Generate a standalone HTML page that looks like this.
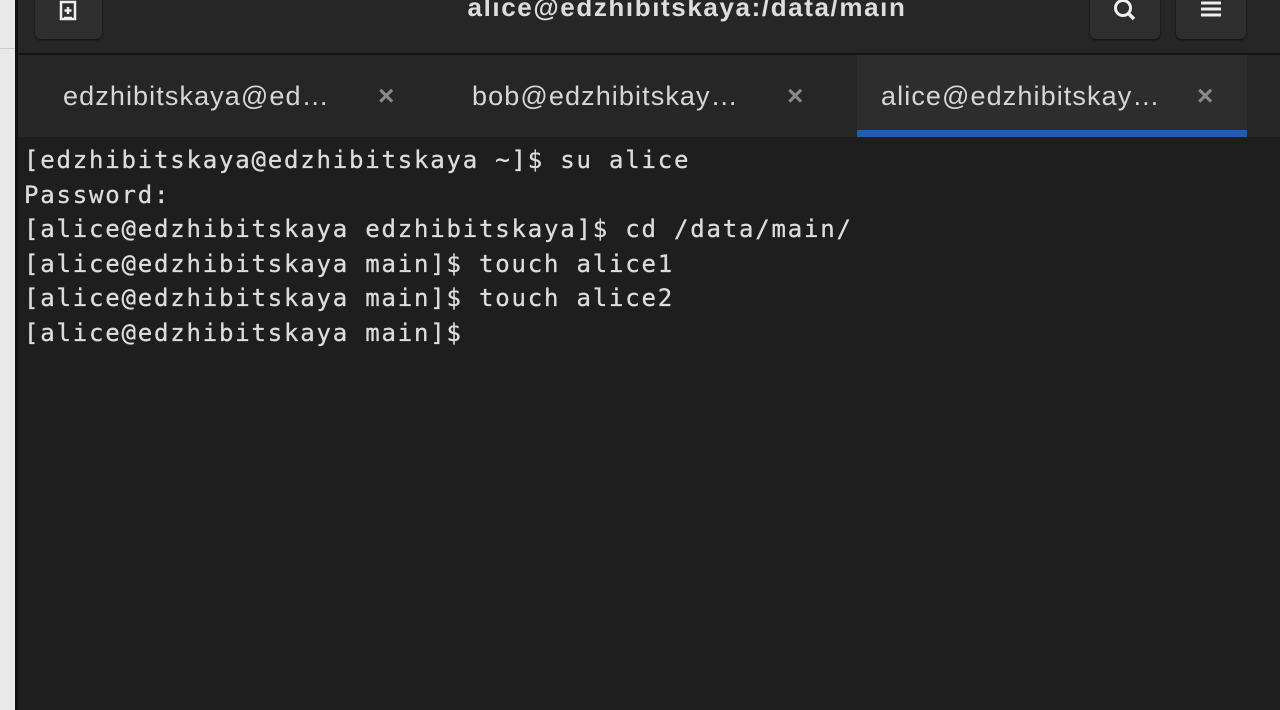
<!DOCTYPE html>
<html><head><style>
body{margin:0;width:1280px;height:710px;overflow:hidden;background:#1e1e1e;position:relative;font-family:"Liberation Sans",sans-serif}
.left{position:absolute;left:0;top:0;width:16px;height:710px;background:#e9e9e9}
.left:after{content:"";position:absolute;left:0;top:48px;width:16px;height:1px;background:#ccc}
.lb{position:absolute;left:15px;top:0;width:3px;height:710px;background:#111}
.hdr{position:absolute;left:18px;top:0;width:1262px;height:53px;background:#262626;border-bottom:2px solid #141414}
.btn{position:absolute;top:-10px;height:49px;background:#2e2e2e;border-radius:6px;box-shadow:0 1px 2px #111}
.title{position:absolute;left:38px;width:1262px;top:-8px;text-align:center;color:#ddd;font-weight:bold;font-size:26px;letter-spacing:1.6px}
.tabs{position:absolute;left:18px;top:55px;width:1262px;height:82px;background:#262626}
.tab{position:absolute;top:0;height:82px;color:#d6d6d6;font-size:27px;letter-spacing:1.1px;line-height:82px}
.tab .x{position:absolute;color:#8a8a8a;font-size:28px;font-weight:bold}
.act{background:#2d2d2d;border-bottom:7px solid #1f5fb0;box-sizing:border-box}
.term{position:absolute;left:24px;top:143px;color:#dcdcdc;font-family:"DejaVu Sans Mono","Liberation Mono",monospace;font-size:24px;line-height:34.6px;letter-spacing:1.8px;white-space:pre;margin:0;-webkit-text-stroke:0.3px #dcdcdc}
</style></head><body>
<div class="left"></div><div class="lb"></div>
<div class="hdr">
 <div class="btn" style="left:17px;width:67px">
  <svg width="67" height="49" viewBox="0 0 67 49"><rect x="26" y="12" width="14" height="17" fill="none" stroke="#eee" stroke-width="2.5"/><path d="M29 28h8M33 17v7M29.5 20.5h7" stroke="#eee" stroke-width="2.5"/></svg>
 </div>
 <div class="title">alice@edzhibitskaya:/data/main</div>
 <div class="btn" style="left:1072px;width:70px">
  <svg width="70" height="49" viewBox="0 0 70 49"><circle cx="33" cy="18" r="7.5" fill="none" stroke="#eee" stroke-width="3"/><path d="M38 23l6 6" stroke="#eee" stroke-width="3.5"/></svg>
 </div>
 <div class="btn" style="left:1158px;width:70px">
  <svg width="70" height="49" viewBox="0 0 70 49"><path d="M25 13h20M25 19h20M25 25h20" stroke="#eee" stroke-width="3"/></svg>
 </div>
</div>
<div class="tabs">
 <div class="tab" style="left:0;width:410px"><span style="position:absolute;left:45px">edzhibitskaya@ed…</span><span class="x" style="left:360px">×</span></div>
 <div class="tab" style="left:410px;width:429px"><span style="position:absolute;left:44px">bob@edzhibitskay…</span><span class="x" style="left:359px">×</span></div>
 <div class="tab act" style="left:839px;width:390px"><span style="position:absolute;left:24px;line-height:82px">alice@edzhibitskay…</span><span class="x" style="left:340px;line-height:82px">×</span></div>
</div>
<pre class="term">[edzhibitskaya@edzhibitskaya ~]$ su alice
Password:
[alice@edzhibitskaya edzhibitskaya]$ cd /data/main/
[alice@edzhibitskaya main]$ touch alice1
[alice@edzhibitskaya main]$ touch alice2
[alice@edzhibitskaya main]$ </pre>
</body></html>
